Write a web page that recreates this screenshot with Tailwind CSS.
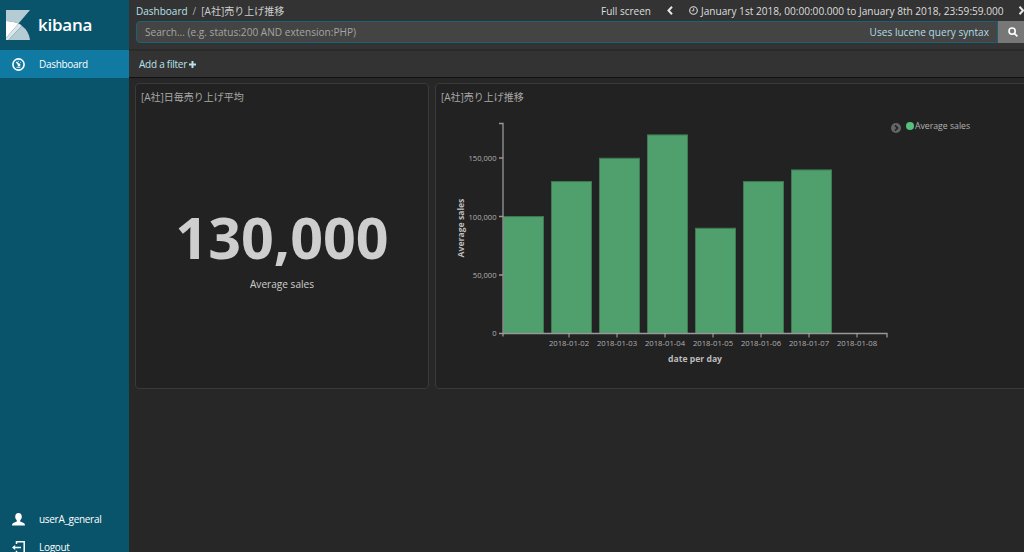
<!DOCTYPE html>
<html lang="ja">

<head>
  <meta charset="UTF-8" />
  <title>Kibana</title>
  <script src="https://cdn.jsdelivr.net/npm/@tailwindcss/browser@4"></script>
</head>

<body class="flex h-screen overflow-hidden bg-[#272727] font-['Open_Sans','Noto_Sans_CJK_JP',sans-serif] text-[10px] leading-4 text-[#cecece]">

  <!-- Side navigation -->
  <nav class="flex w-[129px] shrink-0 flex-col bg-[#0a546b] text-[10px] tracking-[-0.3px] text-white">
    <div class="flex h-[50px] items-center gap-[8px] pl-[6px]">
      <svg class="h-[30px] w-6" viewBox="0 0 24 30">
        <path d="M0 0H24L12.5 13.5Q7 11 0 11Z" fill="#b5ccd4" />
        <path d="M0 11Q7 11 12.5 13.5L0 28Z" fill="#fff" />
        <path d="M12.5 13.5L0 28V30H2.5L15.8 15.7Q14.5 14.5 12.5 13.5Z" fill="#dae6ea" />
        <path d="M15.8 15.7L2.5 30H24Q23 21 15.8 15.7Z" fill="#b5ccd4" />
      </svg>
      <span class="text-[17px] leading-6 font-semibold tracking-[-0.25px]">kibana</span>
    </div>
    <a class="flex h-7 items-center bg-[#117aa2] pl-3">
      <svg class="mr-[14px] h-[13px] w-[13px]" viewBox="0 0 13 13" fill="none" stroke="#fff">
        <circle cx="6.5" cy="6.5" r="5.6" stroke-width="1.6" />
        <path d="M4.3 4L7 6.8" stroke-width="1.5" />
        <circle cx="7" cy="7" r="1.4" fill="#fff" stroke="none" />
        <path d="M6.4 2.8v1M8.9 4l-.7.7M4.6 9.3h3.8" stroke-width=".9" />
      </svg>
      <span>Dashboard</span>
    </a>
    <div class="mt-auto flex h-7 shrink-0 items-center pl-3">
      <svg class="mr-[14px] h-[13px] w-[13px]" viewBox="0 0 13 13" fill="#fff">
        <path d="M6.5 0C4.4 0 3.2 1.5 3.2 3.6C3.2 5.3 3.9 6.5 4.8 7.3V8.6L1.2 10Q0 10.5 0 12.5H13Q13 10.5 11.8 10L8.2 8.6V7.3C9.1 6.5 9.8 5.3 9.8 3.6C9.8 1.5 8.6 0 6.5 0Z" />
      </svg>
      <span>userA_general</span>
    </div>
    <div class="-mb-[9px] flex h-7 shrink-0 items-center pl-3">
      <svg class="mr-[14px] h-[13px] w-[13px]" viewBox="0 0 13 13" fill="none" stroke="#fff" stroke-width="1.5">
        <path d="M4.5 3V.8H12.2V12.2H4.5V9.8M1.5 6.5H9" />
        <path d="M0 6.5L3.2 4V9Z" fill="#fff" stroke="none" />
      </svg>
      <span>Logout</span>
    </div>
  </nav>

  <main class="w-[895px] shrink-0">
    <header class="h-[51px] border-b-2 border-[#2a2a2a] bg-[#333]">
      <div class="flex h-[21px] items-center pl-[7px] whitespace-nowrap">
        <span class="text-[#b7e2ea]">Dashboard</span>
        <span class="mx-[5px] text-[#aaa]">/</span>
        <span>[A社]売り上げ推移</span>
        <div class="ml-auto flex w-[423px] shrink-0 items-center text-[#dedede]">
          <span class="w-[67px]">Full screen</span>
          <svg class="mr-[16px] ml-[2px] h-[9px] w-[6px] shrink-0" viewBox="0 0 6 9" fill="none" stroke="#e6e6e6" stroke-width="2">
            <path d="M5 .8L1.5 4.5L5 8.2" />
          </svg>
          <svg class="mr-[3px] h-[9px] w-[9px] shrink-0" viewBox="0 0 9 9" fill="none" stroke="#dedede">
            <circle cx="4.5" cy="4.5" r="3.8" stroke-width="1.1" />
            <path d="M4.7 2.2V4.8H2.8" stroke-width=".9" />
          </svg>
          <span class="w-[317px] shrink-0 text-[10.1px]">January 1st 2018, 00:00:00.000 to January 8th 2018, 23:59:59.000</span>
          <svg class="h-[9px] w-[6px] shrink-0" viewBox="0 0 6 9" fill="none" stroke="#e6e6e6" stroke-width="2">
            <path d="M1.5 .8L5 4.5L1.5 8.2" />
          </svg>
        </div>
      </div>
      <div class="flex h-[22px] pl-[7px]">
        <div class="flex grow items-center justify-between rounded-l border border-[#1a6279] bg-[#444] pr-[8px] pl-[8px] text-[10.1px]">
          <span class="text-[#a5a5a5]">Search... (e.g. status:200 AND extension:PHP)</span>
          <span class="text-[#b0dde5]">Uses lucene query syntax</span>
        </div>
        <div class="flex w-[26px] items-center bg-[#777] pl-[10px]">
          <svg class="h-[10px] w-[10px]" viewBox="0 0 10 10" fill="none" stroke="#fff" stroke-width="1.6">
            <circle cx="4.1" cy="4.1" r="3.1" />
            <path d="M6.4 6.4L9.4 9.4" />
          </svg>
        </div>
      </div>
    </header>

    <div class="flex h-[27px] items-center gap-[2px] border-b border-[#111] bg-[#333] pl-[10px] tracking-[-0.25px] text-[#b7e2ea]">
      <span>Add a filter</span>
      <svg class="h-[7px] w-[7px]" viewBox="0 0 7 7" stroke="#b7e2ea" stroke-width="2">
        <path d="M3.5 0V7M0 3.5H7" />
      </svg>
    </div>

    <div class="flex gap-[6px] pt-[5px] pl-[6px]">
      <section class="flex h-[306px] w-[294px] shrink-0 flex-col rounded border border-[#3a3a3a] bg-[#222]">
        <h2 class="h-[26px] pl-[5px] leading-[26px] text-[#a8a8a8]">[A社]日毎売り上げ平均</h2>
        <div class="flex grow flex-col items-center pt-[91px]">
          <div class="text-[57.4px] leading-[72px] font-bold">130,000</div>
          <div class="mt-[3px] text-[10.1px]">Average sales</div>
        </div>
      </section>

      <section class="h-[306px] w-[600px] shrink-0 rounded border border-[#3a3a3a] bg-[#222]">
        <h2 class="h-[26px] pl-[5px] leading-[26px] text-[#a8a8a8]">[A社]売り上げ推移</h2>
        <div class="flex">
          <svg class="h-[260px] w-[455px] shrink-0" viewBox="436 110 455 260">
            <g id="bars" fill="#50a06d" stroke="#3f7a55" stroke-width="1"></g>
            <path d="M499 123.5H503V336.5M499 158H503M499 216.5H503M499 275H503M499 333.5H887V337.5" fill="none" stroke="#999" stroke-width="1.3" />
            <g id="ticks" stroke="#aaa"></g>
            <g fill="#b0b0b0" font-size="7.6" text-anchor="end">
              <text x="496.5" y="161">150,000</text>
              <text x="496.5" y="219.5">100,000</text>
              <text x="496.5" y="277.5">50,000</text>
              <text x="496.5" y="336">0</text>
            </g>
            <g id="dates" fill="#b0b0b0" font-size="7.7" text-anchor="middle"></g>
            <g fill="#bcbcbc" font-size="8.65" font-weight="700" text-anchor="middle">
              <text x="695" y="362">date per day</text>
              <text transform="translate(463.5 228) rotate(-90)">Average sales</text>
            </g>
          </svg>
          <div class="mt-[8px] flex h-4 items-center text-[8.7px] text-[#b2b2b2]">
            <svg class="mt-[4px] mr-[5px] h-[10px] w-[10px]" viewBox="0 0 10 10" fill="none">
              <circle cx="5" cy="5" r="5" fill="#666" />
              <path d="M4 2.4L6.6 5L4 7.6" stroke="#222" stroke-width="1.6" />
            </svg>
            <span class="mr-[1px] h-2 w-2 rounded-full bg-[#57c17b]"></span>
            <span>Average sales</span>
          </div>
        </div>
      </section>
    </div>
  </main>

  <script>
    const sales = [100000, 130000, 150000, 170000, 90000, 130000, 140000];
    const bars = document.getElementById("bars");
    const ticks = document.getElementById("ticks");
    const dates = document.getElementById("dates");

    sales.forEach((value, i) => {
      const height = value * 116.7 / 100000;
      bars.innerHTML += `<rect x="${503.5 + i * 48}" y="${333.3 - height}" width="40" height="${height}" />`;
    });

    for (let day = 2; day <= 8; day++) {
      const x = 569 + (day - 2) * 48;
      ticks.innerHTML += `<path d="M${x} 333V337.5" />`;
      dates.innerHTML += `<text x="${x}" y="345.5">2018-01-0${day}</text>`;
    }
  </script>
</body>

</html>
